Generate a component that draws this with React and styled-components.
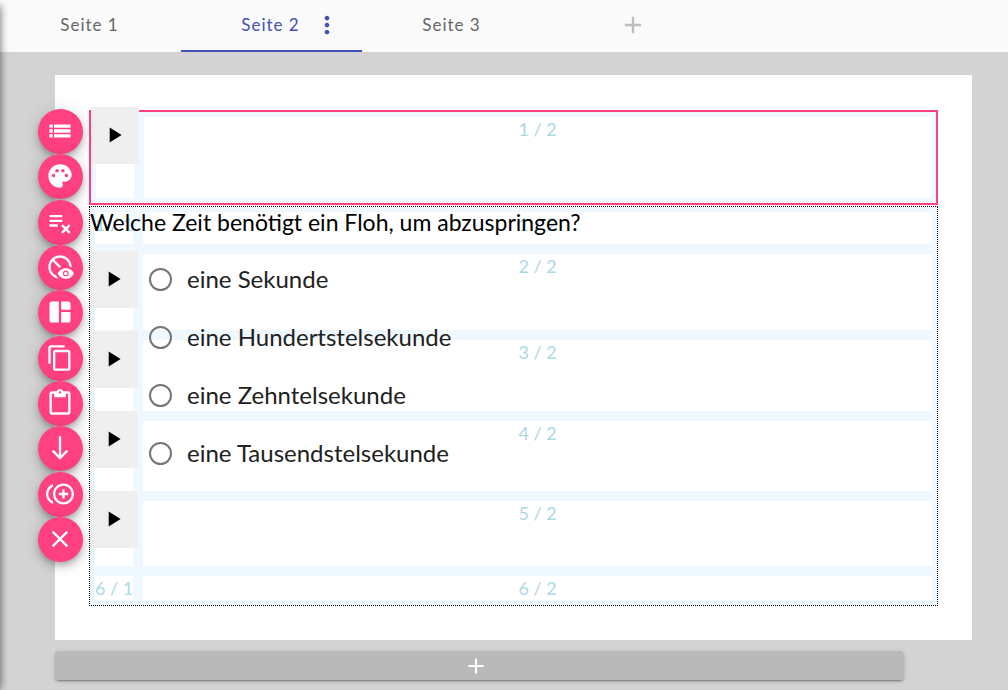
import React, { useState } from "react";
import styled, { createGlobalStyle } from "styled-components";
import {
  MdAdd,
  MdClose,
  MdContentCopy,
  MdContentPaste,
  MdControlPointDuplicate,
  MdDisabledVisible,
  MdMoreVert,
  MdPlayArrow,
  MdPlaylistRemove,
  MdSouth,
  MdSpaceDashboard,
} from "react-icons/md";

const GlobalStyle = createGlobalStyle`
  *, *::before, *::after { box-sizing: border-box; }
  body {
    margin: 0;
    background: #d3d3d3;
    font-family: Lato, "Liberation Sans", sans-serif;
    overflow-x: hidden;
    -webkit-font-smoothing: antialiased;
  }
  button, input { font: inherit; margin: 0; }
  svg { display: block; flex: none; }
`;

const Editor = styled.div`
  position: relative;
  display: flex;
  flex-direction: column;
  min-height: 100vh;
  overflow: hidden;
`;

const DrawerShadow = styled.div`
  position: absolute;
  z-index: 5;
  top: 6px;
  bottom: 0;
  left: -10px;
  width: 10px;
  box-shadow: 0 0 8px rgba(0, 0, 0, 0.6);
`;

const TabBar = styled.nav`
  display: flex;
  height: 52px;
  background: #fafafa;
`;

const TabItem = styled.div`
  display: grid;
  grid-template-columns: 1fr auto 1fr;
  align-items: center;
  width: 181px;
  padding-right: 2px;
  border-bottom: 2px solid ${(p) => (p.$active ? "#3f51b5" : "transparent")};
  color: ${(p) => (p.$active ? "#3f51b5" : "#666666")};
`;

const PlainButton = styled.button`
  display: flex;
  align-items: center;
  justify-content: center;
  padding: 0;
  border: 0;
  background: none;
  color: inherit;
  cursor: pointer;
`;

const TabButton = styled(PlainButton)`
  grid-column: 2;
  font-size: 17px;
  line-height: 24px;
  letter-spacing: 1px;
`;

const TabMenuButton = styled(PlainButton)`
  justify-self: start;
  margin-left: 13px;
`;

const AddTabButton = styled(PlainButton)`
  grid-column: 2;
  color: #bdbdbd;
`;

const Canvas = styled.main`
  position: relative;
  flex: 1;
  padding: 23px 36px 10px 55px;
`;

const Sheet = styled.div`
  display: flex;
  flex-direction: column;
  gap: 1px;
  padding: 35px 34px 34px;
  background: #ffffff;
`;

const Section = styled.section`
  display: grid;
  border: ${(p) => (p.$selected ? "2px solid #ff4081" : "1px dotted #000000")};
`;

const CellGrid = styled.div`
  grid-area: 1 / 1;
  display: grid;
  grid-template-columns: 48px minmax(0, 1fr);
  grid-template-rows: ${(p) => p.$rows};
`;

const Cell = styled.div`
  border: 5px solid #f0f8ff;
  color: #add8e6;
  font-size: 18px;
  line-height: 24px;
  text-align: center;
  white-space: nowrap;
`;

const Content = styled.div`
  grid-area: 1 / 1;
  display: grid;
  grid-template-columns: 48px minmax(0, 1fr);
  grid-template-rows: 44px auto;
  align-items: start;
`;

const PlayColumn = styled.div`
  display: flex;
  flex-direction: column;
  gap: 23px;
`;

const PlayButton = styled(PlainButton)`
  width: 48px;
  height: 57px;
  padding: 0 2px 1px 0;
  background: #efefef;
  color: #000000;
`;

const IntroPlay = styled(PlayButton)`
  grid-area: 1 / 1;
  margin-top: -5px;
`;

const Question = styled.p`
  grid-column: 1 / -1;
  margin: 0;
  color: #000000;
  font-size: 23px;
  line-height: 30px;
`;

const Options = styled.fieldset`
  min-width: 0;
  margin: 0;
  padding: 0 0 0 11px;
  border: 0;
`;

const Option = styled.label`
  display: flex;
  align-items: center;
  gap: 15px;
  height: 58px;
  padding-bottom: 2px;
  color: #212121;
  font-size: 24px;
  line-height: 32px;
`;

const Radio = styled.input`
  appearance: none;
  width: 23px;
  height: 23px;
  border: 2px solid #757575;
  border-radius: 50%;

  &:checked {
    border-color: #ff4081;
    background: radial-gradient(#ff4081 50%, transparent 55%);
  }
`;

const AddSection = styled(PlainButton)`
  width: calc(100% - 68px);
  height: 29px;
  margin-top: 11px;
  padding-right: 8px;
  border-radius: 4px;
  background: #b9b9b9;
  color: #ffffff;
  box-shadow: 0 3px 1px -2px rgba(0, 0, 0, 0.2), 0 2px 2px rgba(0, 0, 0, 0.14),
    0 1px 5px rgba(0, 0, 0, 0.12);
`;

const Toolbox = styled.div`
  position: absolute;
  z-index: 2;
  top: 57px;
  left: 38px;
  display: flex;
  flex-direction: column;
  justify-content: space-between;
  height: 453px;
`;

const Fab = styled(PlainButton)`
  width: 45px;
  height: 45px;
  padding: 0 1px 1px 0;
  border-radius: 50%;
  background: #ff4081;
  color: #ffffff;
  box-shadow: 0 3px 5px -1px rgba(0, 0, 0, 0.2),
    0 6px 10px rgba(0, 0, 0, 0.14), 0 1px 18px rgba(0, 0, 0, 0.12);
`;

const ListIcon = ({ size }) => (
  <svg width={size} height={size} viewBox="0 0 24 24" fill="currentColor">
    <path d="M3 6.4h2.7v2.8H3zM6.9 6.4H21v2.8H6.9zM3 10.6h2.7v2.8H3zM6.9 10.6H21v2.8H6.9zM3 14.8h2.7v2.8H3zM6.9 14.8H21v2.8H6.9z" />
  </svg>
);

const PaletteIcon = ({ size }) => (
  <svg width={size} height={size} viewBox="0 0 24 24" fill="currentColor">
    <path d="M12 2C6.49 2 2 6.49 2 12s4.49 10 10 10c1.38 0 2.5-1.12 2.5-2.5 0-.61-.23-1.2-.64-1.67-.08-.1-.13-.21-.13-.33 0-.28.22-.5.5-.5H16c3.31 0 6-2.69 6-6C22 6.04 17.51 2 12 2zm5.5 11c-.83 0-1.5-.67-1.5-1.5s.67-1.5 1.5-1.5 1.5.67 1.5 1.5-.67 1.5-1.5 1.5zm-3-4c-.83 0-1.5-.67-1.5-1.5S13.67 6 14.5 6s1.5.67 1.5 1.5S15.33 9 14.5 9zM5 11.5c0-.83.67-1.5 1.5-1.5s1.5.67 1.5 1.5S7.33 13 6.5 13 5 12.33 5 11.5zm6-4c0 .83-.67 1.5-1.5 1.5S8 8.33 8 7.5 8.67 6 9.5 6s1.5.67 1.5 1.5z" />
  </svg>
);

const tabs = ["Seite 1", "Seite 2", "Seite 3"];

const tools = [
  ["Liste", ListIcon],
  ["Farbe", PaletteIcon],
  ["Elemente entfernen", MdPlaylistRemove],
  ["Sichtbarkeit", MdDisabledVisible],
  ["Layout", MdSpaceDashboard],
  ["Kopieren", MdContentCopy],
  ["Einfügen", MdContentPaste],
  ["Nach unten", MdSouth],
  ["Duplizieren", MdControlPointDuplicate],
  ["Löschen", MdClose],
];

const cells = [
  ["1 / 1", "1 / 2"],
  ["", "2 / 2"],
  ["", "3 / 2"],
  ["", "4 / 2"],
  ["", "5 / 2"],
  ["6 / 1", "6 / 2"],
];

const options = [
  "eine Sekunde",
  "eine Hundertstelsekunde",
  "eine Zehntelsekunde",
  "eine Tausendstelsekunde",
];

export default function App() {
  const [active, setActive] = useState(1);
  return (
    <>
      <GlobalStyle />
      <Editor>
        <DrawerShadow />
        <TabBar>
          {tabs.map((tab, i) => (
            <TabItem key={tab} $active={i === active}>
              <TabButton onClick={() => setActive(i)}>{tab}</TabButton>
              {i === active && (
                <TabMenuButton aria-label="Seitenmenü">
                  <MdMoreVert size={28} />
                </TabMenuButton>
              )}
            </TabItem>
          ))}
          <TabItem>
            <AddTabButton aria-label="Seite hinzufügen">
              <MdAdd size={28} />
            </AddTabButton>
          </TabItem>
        </TabBar>
        <Canvas>
          <Sheet>
            <Section $selected>
              <CellGrid $rows="91px">
                <Cell />
                <Cell>1 / 2</Cell>
              </CellGrid>
              <IntroPlay aria-label="Abspielen">
                <MdPlayArrow size={26} />
              </IntroPlay>
            </Section>
            <Section>
              <CellGrid $rows="42px 86px 81px 80px 75px 34px">
                {cells.flat().map((label, i) => (
                  <Cell key={i}>{label}</Cell>
                ))}
              </CellGrid>
              <Content>
                <Question id="question">
                  Welche Zeit benötigt ein Floh, um abzuspringen?
                </Question>
                <PlayColumn>
                  {options.map((option) => (
                    <PlayButton key={option} aria-label={`${option} abspielen`}>
                      <MdPlayArrow size={26} />
                    </PlayButton>
                  ))}
                </PlayColumn>
                <Options aria-labelledby="question">
                  {options.map((option) => (
                    <Option key={option}>
                      <Radio type="radio" name="answer" value={option} />
                      {option}
                    </Option>
                  ))}
                </Options>
              </Content>
            </Section>
          </Sheet>
          <AddSection aria-label="Abschnitt hinzufügen">
            <MdAdd size={26} />
          </AddSection>
          <Toolbox>
            {tools.map(([label, Icon]) => (
              <Fab key={label} aria-label={label}>
                <Icon size={28} />
              </Fab>
            ))}
          </Toolbox>
        </Canvas>
      </Editor>
    </>
  );
}
